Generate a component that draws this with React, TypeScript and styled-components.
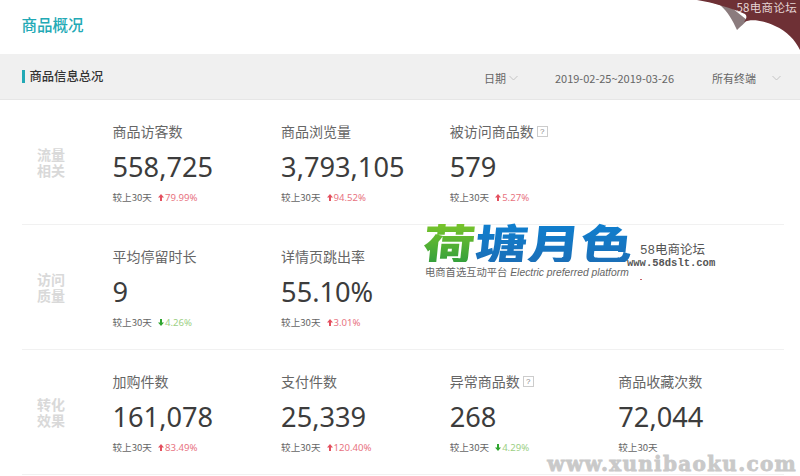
import styled, { createGlobalStyle } from "styled-components";

const GlobalStyle = createGlobalStyle`
  html, body {
    margin: 0;
    padding: 0;
    background: #fff;
    font-family: "Noto Sans CJK SC", "Noto Sans", sans-serif;
  }
`;

const Page = styled.div`
  position: relative;
  width: 800px;
  height: 476px;
  overflow: hidden;
  background: #fff;
`;

const Header = styled.header`
  height: 54px;
  padding: 0 0 6px 21.5px;
  display: flex;
  align-items: center;
  box-sizing: border-box;
`;

const PageTitle = styled.h1`
  margin: 0;
  font-size: 15.5px;
  font-weight: 500;
  color: #22a9b5;
`;

const Toolbar = styled.div`
  height: 46px;
  box-sizing: border-box;
  display: flex;
  align-items: center;
  padding: 0 19px 0 22px;
  background: #f0f0f0;
  border-bottom: 1px solid #e6e6e6;
`;

const SectionTitle = styled.h2`
  margin: 0;
  padding-left: 4.5px;
  border-left: 3px solid #22a9b5;
  font-size: 12.3px;
  line-height: 13px;
  font-weight: 500;
  color: #333;
`;

const Filters = styled.div`
  margin-left: auto;
  display: flex;
  align-items: center;
  font-size: 11px;
  color: #666;
  padding-top: 2px;
`;

const Filter = styled.span<{ $gap: number }>`
  display: flex;
  align-items: center;
  gap: 3px;
  margin-right: ${p => p.$gap}px;
`;

const FilterLast = styled.span`
  display: flex;
  align-items: center;
  gap: 16px;
`;

const Section = styled.section`
  display: grid;
  grid-template-columns: 90.5px repeat(4, 168.6px);
  height: 125px;
  box-sizing: border-box;
  margin: 0 16px 0 22px;
  border-bottom: 1px solid #f1f1f1;
`;

const Category = styled.div`
  align-self: center;
  width: 28px;
  margin-left: 15px;
  font-size: 14px;
  line-height: 16px;
  font-weight: 700;
  color: #d9d9d9;
`;

const Metric = styled.div`
  padding-top: 20px;
`;

const MetricName = styled.div`
  display: flex;
  align-items: center;
  gap: 3px;
  height: 22px;
  font-size: 14px;
  color: #666;
`;

const Help = styled.span`
  width: 9px;
  height: 9px;
  border: 1px solid #ccc;
  font: 8px/9px "Liberation Sans", sans-serif;
  text-align: center;
  color: #888;
`;

const MetricValue = styled.div`
  height: 40px;
  margin-top: 5px;
  font-family: "Noto Sans", sans-serif;
  font-size: 27.2px;
  line-height: 40px;
  color: #3c3c3c;
`;

const Compare = styled.div`
  display: flex;
  align-items: center;
  margin-top: 3px;
  height: 14px;
  font-size: 9.6px;
  color: #666;
`;

const Trend = styled.span<{ $up: boolean }>`
  display: inline-flex;
  align-items: center;
  gap: 1px;
  margin-left: 6px;
  color: ${p => (p.$up ? "#e8737f" : "#9ccf85")};
  font-family: "Noto Sans", sans-serif;
`;

const CornerWrap = styled.div`
  position: absolute;
  top: 0;
  right: 0;
  width: 103px;
  height: 50px;
`;

const CornerText = styled.span`
  position: absolute;
  top: 1px;
  right: 3px;
  font: 11.5px/13px "Noto Sans CJK SC", sans-serif;
  letter-spacing: 0.3px;
  color: #e4d4d4;
`;

const Logo = styled.div`
  position: absolute;
  left: 422px;
  top: 225px;
  width: 218px;
  height: 57px;
  background: #fff;
`;

const LogoMark = styled.div`
  display: flex;
  width: 168px;
  height: 40px;
  margin: -3px 0 0 -1px;
  font-size: 42px;
  line-height: 40px;
  font-weight: 900;
  transform-origin: left bottom;
  transform: skewX(-6deg) scaleX(1.25);
  white-space: nowrap;
`;

const LogoGreen = styled.span`
  background: linear-gradient(#7cc62a, #35a03c);
  -webkit-background-clip: text;
  background-clip: text;
  color: transparent;
`;

const LogoBlue = styled.span`
  background: linear-gradient(#0f7fcf, #1a6fb8);
  -webkit-background-clip: text;
  background-clip: text;
  color: transparent;
`;

const LogoTagline = styled.div`
  margin: 4px 0 0 3px;
  font: 10.3px/14px "Liberation Sans", "Noto Sans CJK SC", sans-serif;
  color: #666;
  white-space: nowrap;

  em {
    font-style: italic;
  }
`;

const ForumName = styled.div`
  position: absolute;
  left: 640px;
  top: 245px;
  font: 12.5px/12px "Liberation Mono", "Noto Sans CJK SC", monospace;
  color: #555;
`;

const ForumUrl = styled.div`
  position: absolute;
  left: 627px;
  top: 258px;
  font: 700 10.5px/11px "Liberation Mono", monospace;
  color: #555;
`;

const StrayMark = styled.span`
  position: absolute;
  left: 640px;
  top: 279px;
  width: 2px;
  height: 1px;
  background: #c9656d;
`;

const Watermark = styled.div`
  position: absolute;
  right: 3px;
  top: 456px;
  font: 900 20px/16px "DejaVu Serif", serif;
  letter-spacing: 1.3px;
  color: #c9c9c9;
  -webkit-text-stroke: 0.8px #c9c9c9;
`;

type MetricData = {
  name: string;
  value: string;
  help?: boolean;
  change?: string;
  up?: boolean;
};

const sections: { category: string; metrics: MetricData[] }[] = [
  {
    category: "流量相关",
    metrics: [
      { name: "商品访客数", value: "558,725", change: "79.99%", up: true },
      { name: "商品浏览量", value: "3,793,105", change: "94.52%", up: true },
      { name: "被访问商品数", value: "579", help: true, change: "5.27%", up: true },
    ],
  },
  {
    category: "访问质量",
    metrics: [
      { name: "平均停留时长", value: "9", change: "4.26%", up: false },
      { name: "详情页跳出率", value: "55.10%", change: "3.01%", up: true },
    ],
  },
  {
    category: "转化效果",
    metrics: [
      { name: "加购件数", value: "161,078", change: "83.49%", up: true },
      { name: "支付件数", value: "25,339", change: "120.40%", up: true },
      { name: "异常商品数", value: "268", help: true, change: "4.29%", up: false },
      { name: "商品收藏次数", value: "72,044" },
    ],
  },
];

function Chevron() {
  return (
    <svg width="9" height="6" viewBox="0 0 9 6" fill="none" stroke="#c4c4c4" strokeWidth="1">
      <path d="M0.5 1 L4.5 5 L8.5 1" />
    </svg>
  );
}

function TrendArrow({ up }: { up: boolean }) {
  return (
    <svg width="6" height="7" viewBox="0 0 6 7" fill={up ? "#e4505f" : "#2fa52f"}>
      <path d={up ? "M3 0 L6 3.5 H4 V7 H2 V3.5 H0 Z" : "M3 7 L6 3.5 H4 V0 H2 V3.5 H0 Z"} />
    </svg>
  );
}

export default function App() {
  return (
    <Page>
      <GlobalStyle />
      <Header>
        <PageTitle>商品概况</PageTitle>
      </Header>
      <Toolbar>
        <SectionTitle>商品信息总况</SectionTitle>
        <Filters>
          <Filter $gap={37}>日期 <Chevron /></Filter>
          <Filter $gap={38}>2019-02-25~2019-03-26</Filter>
          <FilterLast>所有终端 <Chevron /></FilterLast>
        </Filters>
      </Toolbar>
      {sections.map(section => (
        <Section key={section.category}>
          <Category>{section.category}</Category>
          {section.metrics.map(metric => (
            <Metric key={metric.name}>
              <MetricName>
                {metric.name}
                {metric.help && <Help>?</Help>}
              </MetricName>
              <MetricValue>{metric.value}</MetricValue>
              <Compare>
                较上30天
                {metric.change && (
                  <Trend $up={!!metric.up}>
                    <TrendArrow up={!!metric.up} />
                    {metric.change}
                  </Trend>
                )}
              </Compare>
            </Metric>
          ))}
        </Section>
      ))}

      <CornerWrap>
        <svg width="103" height="50" viewBox="0 0 103 50">
          <path d="M0 0 C10 1 18 3 23 5 C31 12 36 21 40 30 C44 26 47 24 50 20 L30 4 Z" fill="#8b7b7d" />
          <path d="M0 0 H103 V50 C98 40 90 31 78 26 C68 21 55 18 47 22 C50 18 50 16 48 14 C34 8 18 3 0 0 Z" fill="#6e3035" />
        </svg>
        <CornerText>58电商论坛</CornerText>
      </CornerWrap>

      <Logo>
        <LogoMark>
          <LogoGreen>荷</LogoGreen>
          <LogoBlue>塘月色</LogoBlue>
        </LogoMark>
        <LogoTagline>电商首选互动平台 <em>Electric preferred platform</em></LogoTagline>
      </Logo>
      <ForumName>58电商论坛</ForumName>
      <ForumUrl>www.58dslt.com</ForumUrl>
      <StrayMark />
      <Watermark>www.xunibaoku.com</Watermark>
    </Page>
  );
}
